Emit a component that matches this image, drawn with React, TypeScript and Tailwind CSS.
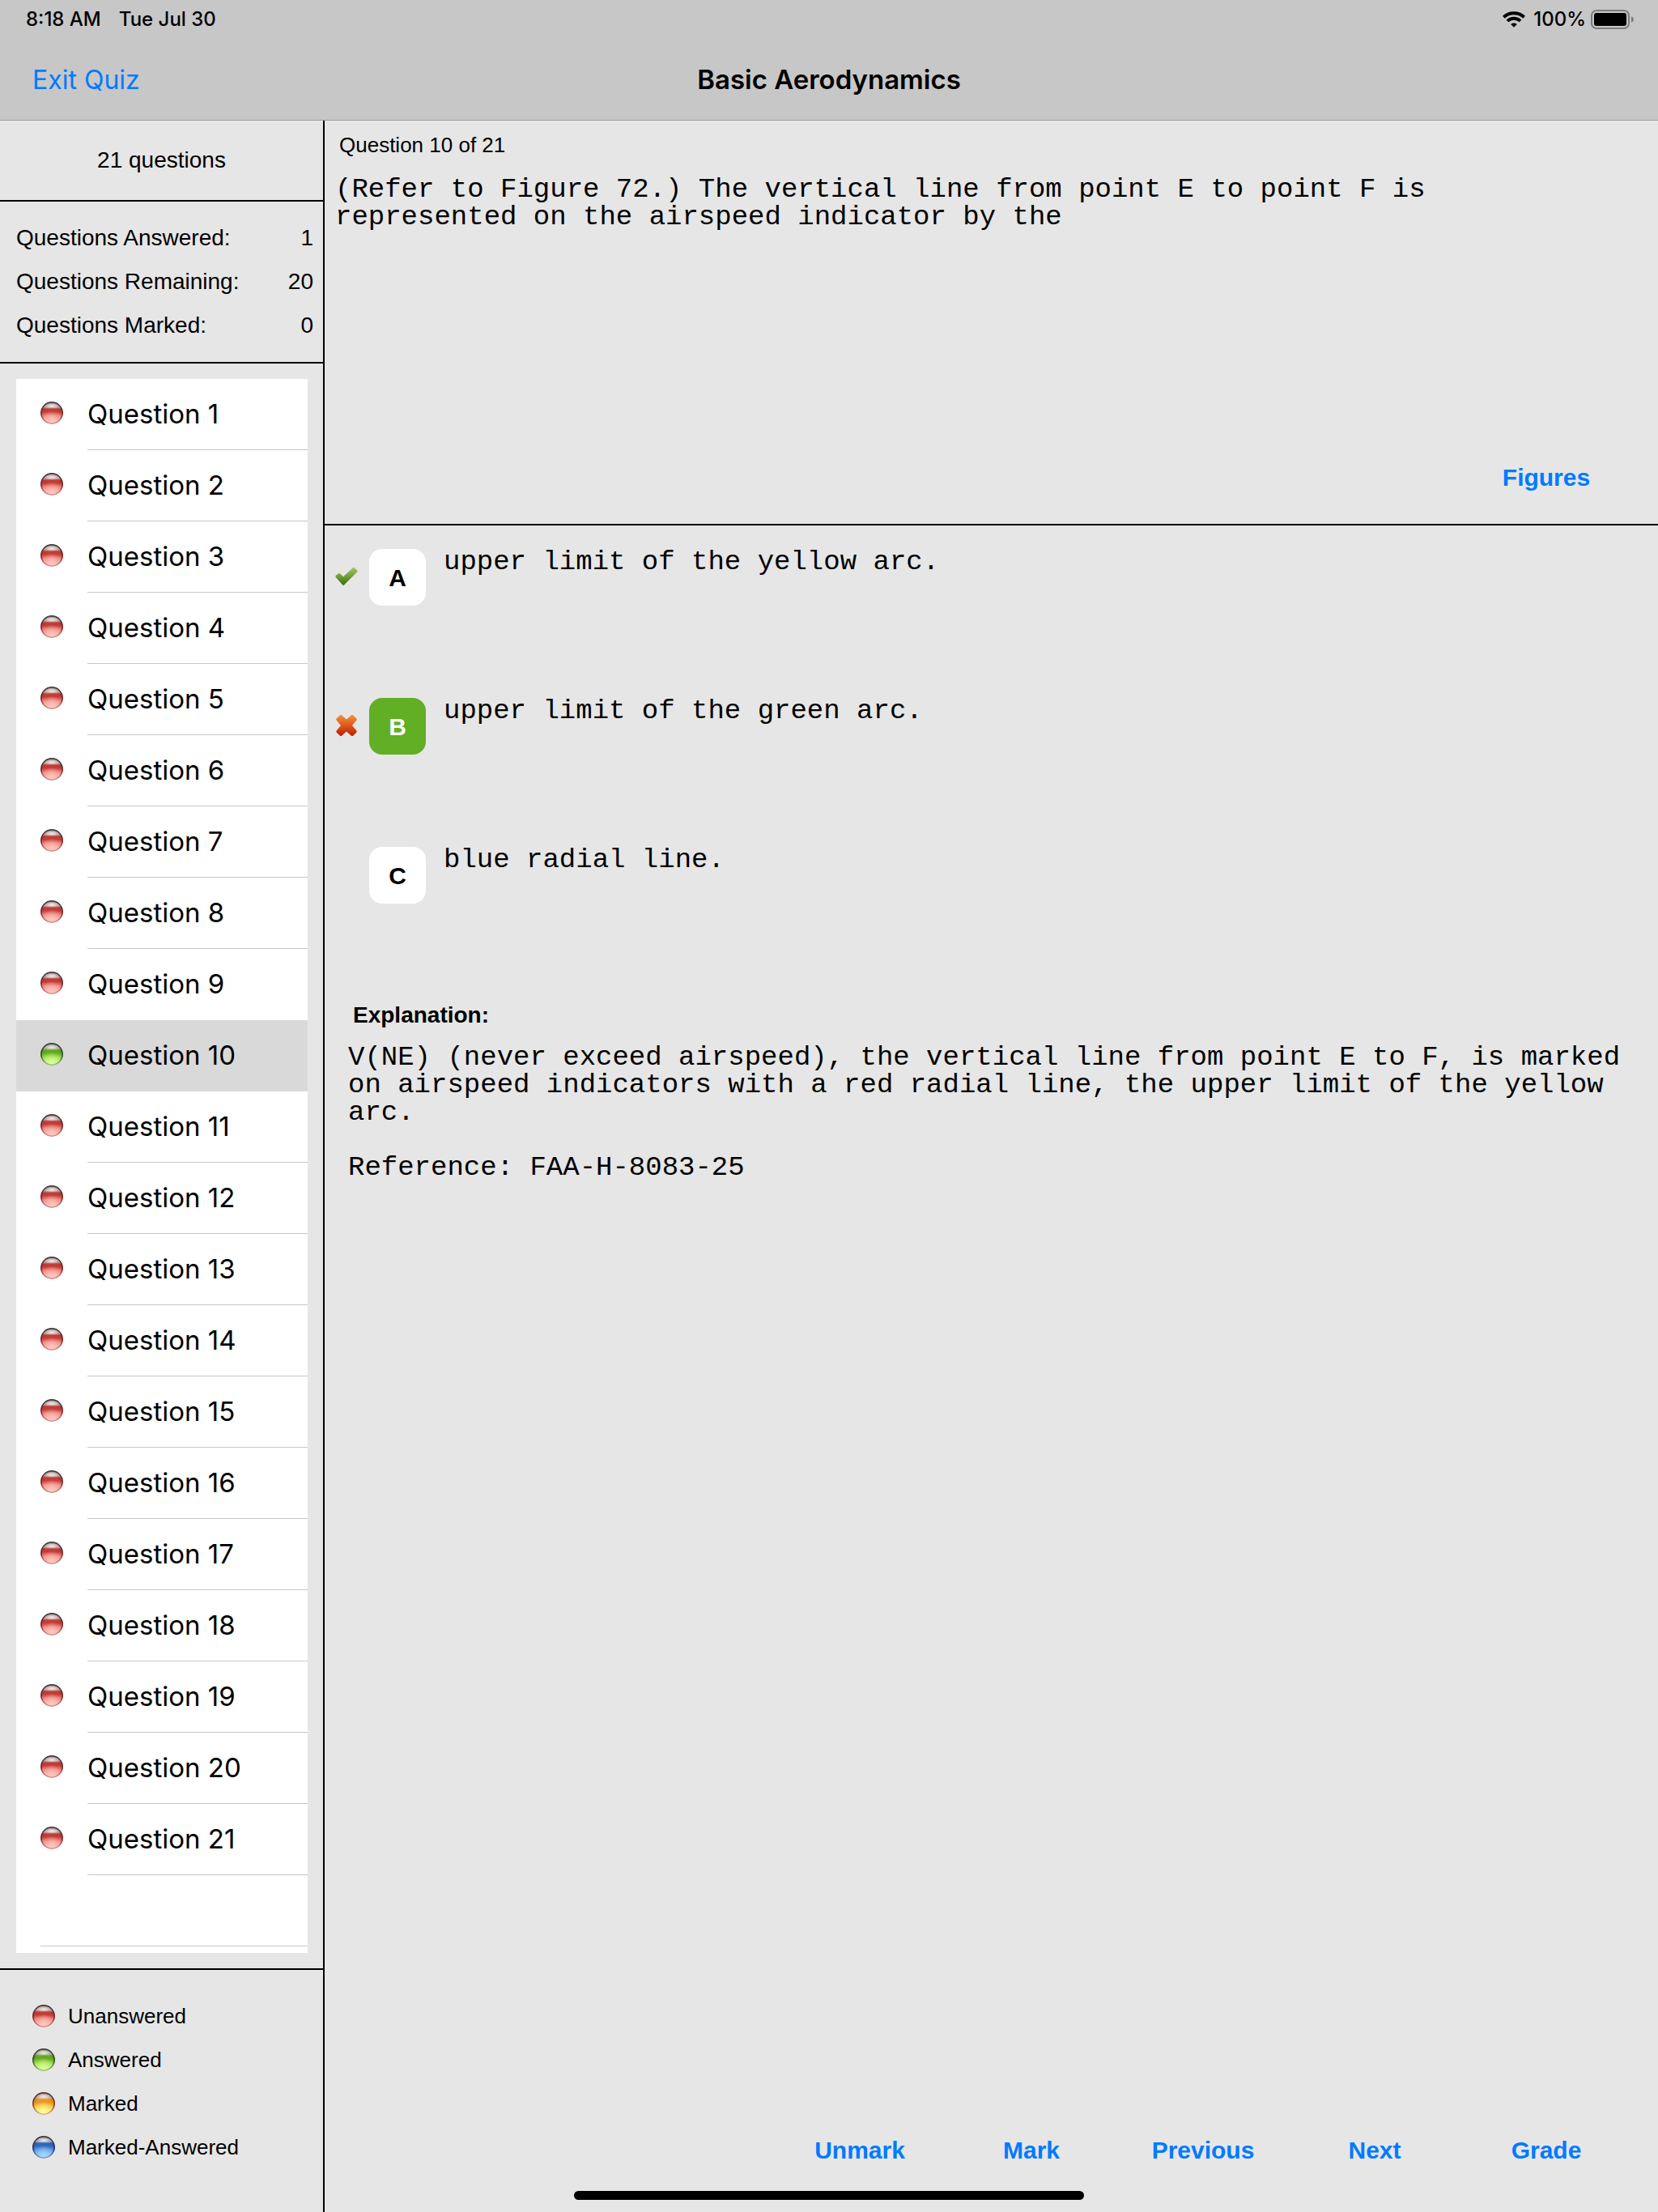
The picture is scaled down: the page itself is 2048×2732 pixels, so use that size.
type Status = "unanswered" | "answered" | "marked" | "markedAnswered";

const orbColors: Record<Status, { top: string; rim: string; mid: string; low: string; glow: string }> = {
  unanswered: { top: "#3c3c3e", rim: "#7c1c1c", mid: "#c23c36", low: "#ee8880", glow: "#ffc8c0" },
  answered: { top: "#3c3c3e", rim: "#1f4a18", mid: "#64aa20", low: "#9ad84c", glow: "#dcff9a" },
  marked: { top: "#4c3434", rim: "#84301c", mid: "#e8981f", low: "#f9c544", glow: "#ffff9c" },
  markedAnswered: { top: "#3c3c3e", rim: "#231c6c", mid: "#2f68bc", low: "#5c9ee8", glow: "#a8d8ff" },
};

function Orb({ status }: { status: Status }) {
  const c = orbColors[status];
  return (
    <svg viewBox="0 0 28 28" className="size-7 shrink-0" aria-hidden="true">
      <defs>
        <linearGradient id={`body-${status}`} x1="0" y1="0" x2="0" y2="1">
          <stop offset="0" stopColor="#8c8c8c" />
          <stop offset="0.12" stopColor="#d2cfcf" />
          <stop offset="0.22" stopColor="#dccccc" />
          <stop offset="0.32" stopColor={c.mid} />
          <stop offset="0.44" stopColor={c.mid} />
          <stop offset="0.64" stopColor={c.low} />
          <stop offset="1" stopColor={c.glow} />
        </linearGradient>
        <linearGradient id={`rim-${status}`} x1="0" y1="0" x2="0" y2="1">
          <stop offset="0" stopColor={c.top} />
          <stop offset="0.25" stopColor={c.top} />
          <stop offset="0.5" stopColor={c.rim} />
          <stop offset="0.8" stopColor={c.rim} stopOpacity="0.5" />
          <stop offset="1" stopColor={c.rim} stopOpacity="0.35" />
        </linearGradient>
        <radialGradient id={`glow-${status}`} cx="0.5" cy="0.85" r="0.45">
          <stop offset="0" stopColor={c.glow} stopOpacity="0.9" />
          <stop offset="1" stopColor={c.glow} stopOpacity="0" />
        </radialGradient>
        <radialGradient id={`shade-${status}`} cx="0.5" cy="0.62" r="0.62">
          <stop offset="0.6" stopColor={c.rim} stopOpacity="0" />
          <stop offset="1" stopColor={c.rim} stopOpacity="0.4" />
        </radialGradient>
        <radialGradient id={`shine-${status}`}>
          <stop offset="0" stopColor="#f0eeee" stopOpacity="0.85" />
          <stop offset="1" stopColor="#f0eeee" stopOpacity="0" />
        </radialGradient>
      </defs>
      <circle cx="14" cy="14" r="13.5" fill={`url(#body-${status})`} />
      <circle cx="14" cy="14" r="13.5" fill={`url(#shade-${status})`} />
      <circle cx="14" cy="14" r="13.5" fill={`url(#glow-${status})`} />
      <circle cx="14" cy="14" r="13.2" fill="none" stroke={`url(#rim-${status})`} strokeWidth="1.5" />
      <ellipse cx="14" cy="5.2" rx="8" ry="3.6" fill={`url(#shine-${status})`} />
    </svg>
  );
}

function CheckIcon() {
  return (
    <svg viewBox="0 0 28 24" className="h-6 w-7" role="img" aria-label="Correct answer">
      <defs>
        <linearGradient id="check-fill" x1="0" y1="0" x2="0" y2="1">
          <stop offset="0" stopColor="#9cc865" />
          <stop offset="0.5" stopColor="#709f38" />
          <stop offset="1" stopColor="#3c6d08" />
        </linearGradient>
      </defs>
      <path
        d="M1 10.5 4 8.400Q5.200 7.600 6.300 8.600L10 12.200 21.800 1.200Q23 .3 24 1.200L27.200 4.400Q28 5.200 27.300 6.200L11 22.600Q10.200 23.300 9.300 22.600L.8 13Q0 11.400 1 10.500Z"
        fill="url(#check-fill)"
      />
    </svg>
  );
}

function CrossIcon() {
  return (
    <svg viewBox="0 0 28 28" className="size-7" role="img" aria-label="Wrong answer">
      <defs>
        <linearGradient id="cross-fill" x1="0" y1="0" x2="0" y2="1">
          <stop offset="0" stopColor="#f29238" />
          <stop offset="0.5" stopColor="#dc5a1c" />
          <stop offset="1" stopColor="#c01800" />
        </linearGradient>
      </defs>
      <path
        d="M6 1.200Q7 .4 8 1.200L14 6.600 20 1.200Q21 .4 22 1.200L26.400 5.600Q27.300 6.600 26.400 7.600L21 14 26.400 20.400Q27.300 21.400 26.400 22.400L22 26.800Q21 27.600 20 26.800L14 21.400 8 26.800Q7 27.600 6 26.800L1.600 22.400Q.7 21.400 1.600 20.400L7 14 1.600 7.600Q.7 6.600 1.600 5.600Z"
        fill="url(#cross-fill)"
      />
    </svg>
  );
}

function WifiIcon() {
  return (
    <svg viewBox="0 0 28 20" className="h-5 w-7" role="img" aria-label="Wi-Fi">
      <path d="M1.400 7.200A18.500 18.500 0 0 1 26.600 7.200" fill="none" stroke="#000" strokeWidth="4" />
      <path d="M6 12A11.500 11.500 0 0 1 22 12" fill="none" stroke="#000" strokeWidth="3.800" />
      <path d="M14 19.800 10.200 16A5.600 5.600 0 0 1 17.800 16Z" fill="#000" />
    </svg>
  );
}

function BatteryIcon() {
  return (
    <svg viewBox="0 0 54 24" className="h-6 w-[54px]" role="img" aria-label="Battery full">
      <rect x="1" y="1" width="46" height="22" rx="6" fill="none" stroke="#7c7c7c" strokeWidth="2" />
      <rect x="4" y="4" width="40" height="16" rx="3" fill="#000" />
      <path d="M50 8.200C51.800 8.800 53 10.200 53 12S51.800 15.200 50 15.800Z" fill="#7c7c7c" />
    </svg>
  );
}

const stats = [
  { label: "Questions Answered:", value: 1 },
  { label: "Questions Remaining:", value: 20 },
  { label: "Questions Marked:", value: 0 },
];

const legend: { status: Status; label: string }[] = [
  { status: "unanswered", label: "Unanswered" },
  { status: "answered", label: "Answered" },
  { status: "marked", label: "Marked" },
  { status: "markedAnswered", label: "Marked-Answered" },
];

const answers = [
  { letter: "A", text: "upper limit of the yellow arc.", mark: "check", selected: false },
  { letter: "B", text: "upper limit of the green arc.", mark: "cross", selected: true },
  { letter: "C", text: "blue radial line.", mark: "", selected: false },
];

const actions = ["Unmark", "Mark", "Previous", "Next", "Grade"];
const questions = Array.from({ length: 21 }, (_, i) => i + 1);
const current = 10;

function Sidebar() {
  return (
    <aside className="flex w-[401px] shrink-0 flex-col border-r-2 border-black">
      <div className="flex h-[100px] items-center justify-center border-b-2 border-black text-[28px]">
        21 questions
      </div>
      <dl className="flex h-[200px] flex-col justify-center border-b-2 border-black pr-3 pl-5 text-[28px] leading-[54px]">
        {stats.map((s) => (
          <div key={s.label} className="flex justify-between">
            <dt>{s.label}</dt>
            <dd>{s.value}</dd>
          </div>
        ))}
      </dl>
      <nav
        aria-label="Questions"
        className="mt-[19px] mr-[19px] mb-[19px] ml-5 flex-1 bg-white font-['Inter',sans-serif] text-[33px]"
      >
        <ul>
          {questions.map((n) => (
            <li key={n}>
              <button
                type="button"
                aria-current={n === current}
                className={
                  n === current
                    ? "flex h-[88px] w-full items-center bg-[#d9d9d9] pl-[30px] text-left"
                    : "flex h-[88px] w-full items-center pl-[30px] text-left"
                }
              >
                <span className="pb-1">
                  <Orb status={n === current ? "answered" : "unanswered"} />
                </span>
                <span
                  className={
                    n === current || n === current - 1
                      ? "ml-[30px] flex h-full flex-1 items-center border-b border-transparent"
                      : "ml-[30px] flex h-full flex-1 items-center border-b border-[#c8c8cc]"
                  }
                >
                  Question {n}
                </span>
              </button>
            </li>
          ))}
          <li className="ml-[30px] h-[88px] border-b border-[#c8c8cc]" />
        </ul>
      </nav>
      <ul className="flex h-[301px] flex-col gap-[26px] border-t-2 border-black pt-[43px] pl-10 text-[26px] leading-7">
        {legend.map((l) => (
          <li key={l.status} className="flex items-center gap-4">
            <Orb status={l.status} />
            {l.label}
          </li>
        ))}
      </ul>
    </aside>
  );
}

function QuestionPane() {
  return (
    <main className="flex min-w-0 flex-1 flex-col">
      <section className="flex h-[500px] flex-col border-b-2 border-black">
        <h2 className="px-[18px] pt-3.5 text-[26px] leading-8">Question 10 of 21</h2>
        <p className="mt-[22px] px-[13px] font-['Liberation_Mono',monospace] text-[34px] leading-[34px]">
          (Refer to Figure 72.) The vertical line from point E to point F is
          <br />
          represented on the airspeed indicator by the
        </p>
        <button type="button" className="mt-auto mr-8 mb-[37px] w-[212px] self-end text-[30px] leading-10 font-bold text-[#007aff]">
          Figures
        </button>
      </section>

      <ul className="pt-[29px]">
        {answers.map((a) => (
          <li key={a.letter} className="flex h-[184px] items-start">
            <span className="ml-[12px] flex h-[68px] w-[30px] shrink-0 items-center justify-center">
              {a.mark === "check" && <CheckIcon />}
              {a.mark === "cross" && <CrossIcon />}
            </span>
            <button
              type="button"
              aria-pressed={a.selected}
              aria-describedby={`answer-${a.letter}`}
              className={
                a.selected
                  ? "ml-[13px] size-[70px] shrink-0 rounded-2xl bg-[#62ae25] text-[30px] font-bold text-white"
                  : "ml-[13px] size-[70px] shrink-0 rounded-2xl bg-white text-[30px] font-bold"
              }
            >
              {a.letter}
            </button>
            <p
              id={`answer-${a.letter}`}
              className="ml-[22px] font-['Liberation_Mono',monospace] text-[34px] leading-8"
            >
              {a.text}
            </p>
          </li>
        ))}
      </ul>

      <section className="pt-1.5 pr-5 pl-[29px]">
        <h3 className="pl-1.5 text-[28px] leading-9 font-bold">Explanation:</h3>
        <div className="mt-[17px] flex flex-col gap-[34px] font-['Liberation_Mono',monospace] text-[34px] leading-[34px]">
          <p>
            V(NE) (never exceed airspeed), the vertical line from point E to F, is marked on airspeed indicators with a
            red radial line, the upper limit of the yellow arc.
          </p>
          <p>Reference: FAA-H-8083-25</p>
        </div>
      </section>

      <div className="mt-auto mr-8 mb-[56px] flex justify-end text-[30px] leading-10 font-bold text-[#007aff]">
        {actions.map((a) => (
          <button key={a} type="button" className="w-[212px]">
            {a}
          </button>
        ))}
      </div>
    </main>
  );
}

export default function App() {
  return (
    <div className="relative flex min-h-screen flex-col bg-[#e6e6e6] font-['Liberation_Sans',Arial,sans-serif] text-black">
      <header className="border-b border-[#9e9e9e] bg-[#c7c7c7] font-['Inter',sans-serif]">
        <div className="flex h-12 items-center justify-between pr-[29px] pl-8 text-[24px] font-medium">
          <div className="flex gap-[22px]">
            <span>8:18 AM</span>
            <span>Tue Jul 30</span>
          </div>
          <div className="flex items-center gap-1.5">
            <WifiIcon />
            <span className="pl-1">100%</span>
            <BatteryIcon />
          </div>
        </div>
        <div className="grid h-[100px] grid-cols-3 items-center px-10 pt-0.5">
          <button type="button" className="justify-self-start text-[32px] text-[#007aff]">
            Exit Quiz
          </button>
          <h1 className="text-center text-[33px] font-semibold">Basic Aerodynamics</h1>
        </div>
      </header>
      <div className="flex flex-1">
        <Sidebar />
        <QuestionPane />
      </div>
      <div className="absolute bottom-[15px] left-1/2 h-[11px] w-[630px] -translate-x-1/2 rounded-full bg-black" />
    </div>
  );
}
